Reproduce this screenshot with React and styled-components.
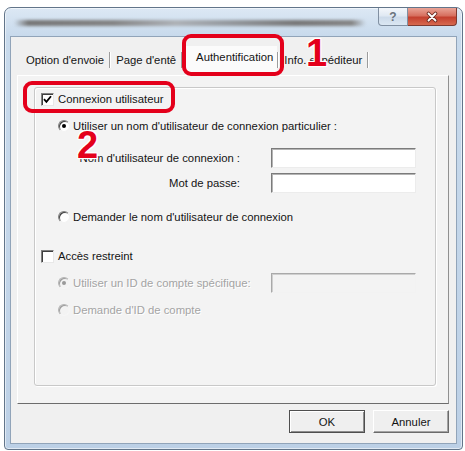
import React from 'react';
import styled, { createGlobalStyle } from 'styled-components';

const RED = '#e4001b';

const GlobalStyle = createGlobalStyle`
  html, body {
    margin: 0;
    padding: 0;
    background: #fff;
  }
`;

const Screen = styled.div`
  position: relative;
  width: 465px;
  height: 451px;
  box-sizing: border-box;
  padding: 7px 2px 1px 4px;
  display: flex;
  overflow: hidden;
  font-family: 'Liberation Sans', Arial, sans-serif;
  font-size: 11.3px;
  color: #141414;
`;

const Window = styled.div`
  flex: 1;
  display: flex;
  flex-direction: column;
  padding: 0 5px 5px;
  border: 1px solid #62758a;
  border-radius: 7px 7px 4px 4px;
  background: linear-gradient(#dce8f4, #c8daec 28px, #c2d5e9 60%, #bcd0e6);
  box-shadow: inset 0 0 0 1px rgba(255, 255, 255, 0.55);
`;

const TitleBar = styled.div`
  height: 28px;
  display: flex;
  align-items: flex-start;
`;

const TitleSmear = styled.div`
  width: 352px;
  height: 6px;
  margin: 12px 0 0 4px;
  border-radius: 3px;
  background: linear-gradient(
    90deg,
    rgba(100, 100, 100, 0) 0%,
    #767676 4%,
    #838383 28%,
    #adb1b6 46%,
    #959a9f 60%,
    #777777 80%,
    #858585 96%,
    rgba(100, 100, 100, 0)
  );
  filter: blur(1.4px);
`;

const CaptionButtons = styled.div`
  margin-left: auto;
  display: flex;
`;

const CaptionButton = styled.div`
  width: ${p => p.$w}px;
  height: 18px;
  box-sizing: border-box;
  display: flex;
  align-items: center;
  justify-content: center;
  border: 1px solid ${p => (p.$close ? '#7d3a31' : '#8190a2')};
  border-top: none;
  border-radius: ${p => (p.$close ? '0 0 4px 0' : '0 0 0 4px')};
  background: ${p =>
    p.$close
      ? 'linear-gradient(#e9a497, #d7705f 45%, #c4402f 55%, #d7694f)'
      : 'linear-gradient(#f4f7fb, #e0e9f3 45%, #cddbea 55%, #dbe7f3)'};
  color: #6a737d;
  font-size: 12px;
  font-weight: bold;

  & + & {
    border-left: none;
  }
`;

const Client = styled.div`
  flex: 1;
  display: flex;
  flex-direction: column;
  padding: 0 7px 10px 6px;
  border: 1px solid #91a4b9;
  background: #f0f0f0;
`;

const TabStrip = styled.div`
  height: 38px;
  box-sizing: border-box;
  display: flex;
  align-items: flex-end;
  padding: 0 0 7px 4px;
`;

const Tab = styled.div`
  line-height: 16px;
  white-space: nowrap;
  padding: ${p => (p.$active ? '3px 4px 7px 13px' : '0 5px')};
  margin-bottom: ${p => (p.$active ? '-4px' : '0')};
  background: ${p => (p.$active ? '#fbfbfb' : 'transparent')};
`;

const TabSep = styled.span`
  width: 1px;
  height: 16px;
  background: #9c9c9c;
  border-right: 1px solid #fff;
`;

const Panel = styled.div`
  flex: 1;
  display: flex;
  padding: 11px 12px 17px 16px;
  border: 1px solid;
  border-color: #fff #909090 #6c6c6c #fff;
  background: #f3f3f3;
`;

const GroupBox = styled.div`
  flex: 1;
  display: flex;
  flex-direction: column;
  padding-left: 6px;
  border: 1px solid #c8c8c8;
  border-radius: 3px;
  box-shadow: 1px 1px 0 #fff, inset 1px 1px 0 #fff;
`;

const Row = styled.div`
  display: flex;
  align-items: center;
  gap: ${p => p.$gap || 4}px;
  height: 16px;
  margin-top: ${p => p.$mt || 0}px;
  padding-left: ${p => p.$indent || 0}px;
  white-space: nowrap;
  color: ${p => (p.$disabled ? '#a4a4a4' : 'inherit')};
  text-shadow: ${p => (p.$disabled ? '1px 1px 0 #fff' : 'none')};
`;

const FieldRow = styled.div`
  display: grid;
  grid-template-columns: 230px 145px;
  align-items: center;
  height: 20px;
  margin-top: ${p => p.$mt}px;
`;

const FieldLabel = styled.label`
  text-align: right;
  padding-right: 31px;
  white-space: nowrap;
`;

const TextBox = styled.input`
  width: 145px;
  height: 20px;
  box-sizing: border-box;
  margin: 0;
  padding: 0 3px;
  font: inherit;
  border: 1px solid;
  border-color: ${p =>
    p.disabled ? '#a9a9a9 #f2f2f2 #f2f2f2 #a9a9a9' : '#7b7b7b #ececec #ececec #7b7b7b'};
  box-shadow: inset 1px 1px 0 ${p => (p.disabled ? '#cfcfcf' : '#b4b4b4')};
  background: ${p => (p.disabled ? '#f3f3f3' : '#fff')};
  outline: none;
`;

const CheckBox = styled.span`
  flex-shrink: 0;
  width: 13px;
  height: 13px;
  box-sizing: border-box;
  display: flex;
  align-items: center;
  justify-content: center;
  border: 1px solid;
  border-color: #808080 #e8e8e8 #e8e8e8 #808080;
  box-shadow: inset 1px 1px 0 #3f3f3f;
  background: #fff;
`;

const Radio = styled.span`
  flex-shrink: 0;
  width: 12px;
  height: 12px;
  box-sizing: border-box;
  display: flex;
  align-items: center;
  justify-content: center;
  border-radius: 50%;
  border: 1px solid;
  border-color: ${p =>
    p.$disabled ? '#b4b4b4 #f6f6f6 #f6f6f6 #b4b4b4' : '#808080 #f2f2f2 #f2f2f2 #808080'};
  box-shadow: inset 1px 1px 0 ${p => (p.$disabled ? '#9d9d9d' : '#404040')};
  background: ${p => (p.$disabled ? '#f3f3f3' : '#fff')};

  &::after {
    content: '';
    display: ${p => (p.$checked ? 'block' : 'none')};
    width: 4px;
    height: 4px;
    border-radius: 50%;
    background: ${p => (p.$disabled ? '#9a9a9a' : '#000')};
  }
`;

const ButtonBar = styled.div`
  display: flex;
  justify-content: flex-end;
  gap: 8px;
  margin-top: 6px;
`;

const Button = styled.button`
  width: 76px;
  height: 23px;
  box-sizing: border-box;
  margin: 0;
  padding: 0;
  font: inherit;
  color: #141414;
  background: #efefef;
  border: 1px solid;
  border-color: ${p => (p.$default ? '#4e4e4e' : '#fff #6a6a6a #6a6a6a #fff')};
  box-shadow: ${p =>
    p.$default
      ? 'inset 1px 1px 0 #fff, inset -1px -1px 0 #8d8d8d'
      : 'inset -1px -1px 0 #a3a3a3'};
`;

const Callout = styled.div`
  position: absolute;
  left: ${p => p.$x}px;
  top: ${p => p.$y}px;
  width: ${p => p.$w}px;
  height: ${p => p.$h}px;
  box-sizing: border-box;
  border: 4px solid ${RED};
  border-radius: 9px;
  pointer-events: none;
`;

const StepNumber = styled.div`
  position: absolute;
  left: ${p => p.$x}px;
  top: ${p => p.$y}px;
  font-family: 'Liberation Sans', Arial, sans-serif;
  font-size: 38px;
  line-height: 38px;
  font-weight: bold;
  color: ${RED};
  text-shadow: 1px 1px 0 #fff, -1px -1px 0 #fff, 1px -1px 0 #fff, -1px 1px 0 #fff,
    0 0 3px #fff;
  pointer-events: none;
`;

function CheckMark() {
  return (
    <svg width="9" height="9" viewBox="0 0 9 9">
      <path d="M1 4.2 L3.4 6.8 L8 1.2" fill="none" stroke="#000" strokeWidth="1.8" />
    </svg>
  );
}

function CloseGlyph() {
  return (
    <svg width="14" height="12" viewBox="0 0 14 12">
      <path d="M3.5 2.5 L10.5 9.5 M10.5 2.5 L3.5 9.5" stroke="#6a2a20" strokeWidth="3.6" strokeLinecap="round" />
      <path d="M3.5 2.5 L10.5 9.5 M10.5 2.5 L3.5 9.5" stroke="#fff" strokeWidth="1.8" strokeLinecap="round" />
    </svg>
  );
}

const tabs = ["Option d'envoie", "Page d'entê", 'Authentification', 'Info. expéditeur'];

export default function App() {
  return (
    <Screen>
      <GlobalStyle />
      <Window>
        <TitleBar>
          <TitleSmear />
          <CaptionButtons>
            <CaptionButton $w={30}>?</CaptionButton>
            <CaptionButton $w={49} $close>
              <CloseGlyph />
            </CaptionButton>
          </CaptionButtons>
        </TitleBar>

        <Client>
          <TabStrip>
            {tabs.map(label => (
              <React.Fragment key={label}>
                <Tab $active={label === 'Authentification'}>{label}</Tab>
                <TabSep />
              </React.Fragment>
            ))}
          </TabStrip>

          <Panel>
            <GroupBox>
              <Row $mt={3}>
                <CheckBox>
                  <CheckMark />
                </CheckBox>
                Connexion utilisateur
              </Row>
              <Row $mt={11} $indent={17} $gap={3}>
                <Radio $checked />
                Utiliser un nom d'utilisateur de connexion particulier :
              </Row>
              <FieldRow $mt={14}>
                <FieldLabel>Nom d'utilisateur de connexion :</FieldLabel>
                <TextBox readOnly />
              </FieldRow>
              <FieldRow $mt={5}>
                <FieldLabel>Mot de passe:</FieldLabel>
                <TextBox readOnly type="password" />
              </FieldRow>
              <Row $mt={16} $indent={17} $gap={3}>
                <Radio />
                Demander le nom d'utilisateur de connexion
              </Row>

              <Row $mt={23}>
                <CheckBox />
                Accès restreint
              </Row>
              <FieldRow $mt={9}>
                <Row $indent={17} $gap={3} $disabled>
                  <Radio $checked $disabled />
                  Utiliser un ID de compte spécifique:
                </Row>
                <TextBox disabled />
              </FieldRow>
              <Row $mt={9} $indent={17} $gap={3} $disabled>
                <Radio $disabled />
                Demande d'ID de compte
              </Row>
            </GroupBox>
          </Panel>

          <ButtonBar>
            <Button $default>OK</Button>
            <Button>Annuler</Button>
          </ButtonBar>
        </Client>
      </Window>

      <Callout $x={182} $y={34} $w={102} $h={42} />
      <Callout $x={23} $y={81} $w={152} $h={32} />
      <StepNumber $x={306} $y={34}>1</StepNumber>
      <StepNumber $x={77} $y={126}>2</StepNumber>
    </Screen>
  );
}
